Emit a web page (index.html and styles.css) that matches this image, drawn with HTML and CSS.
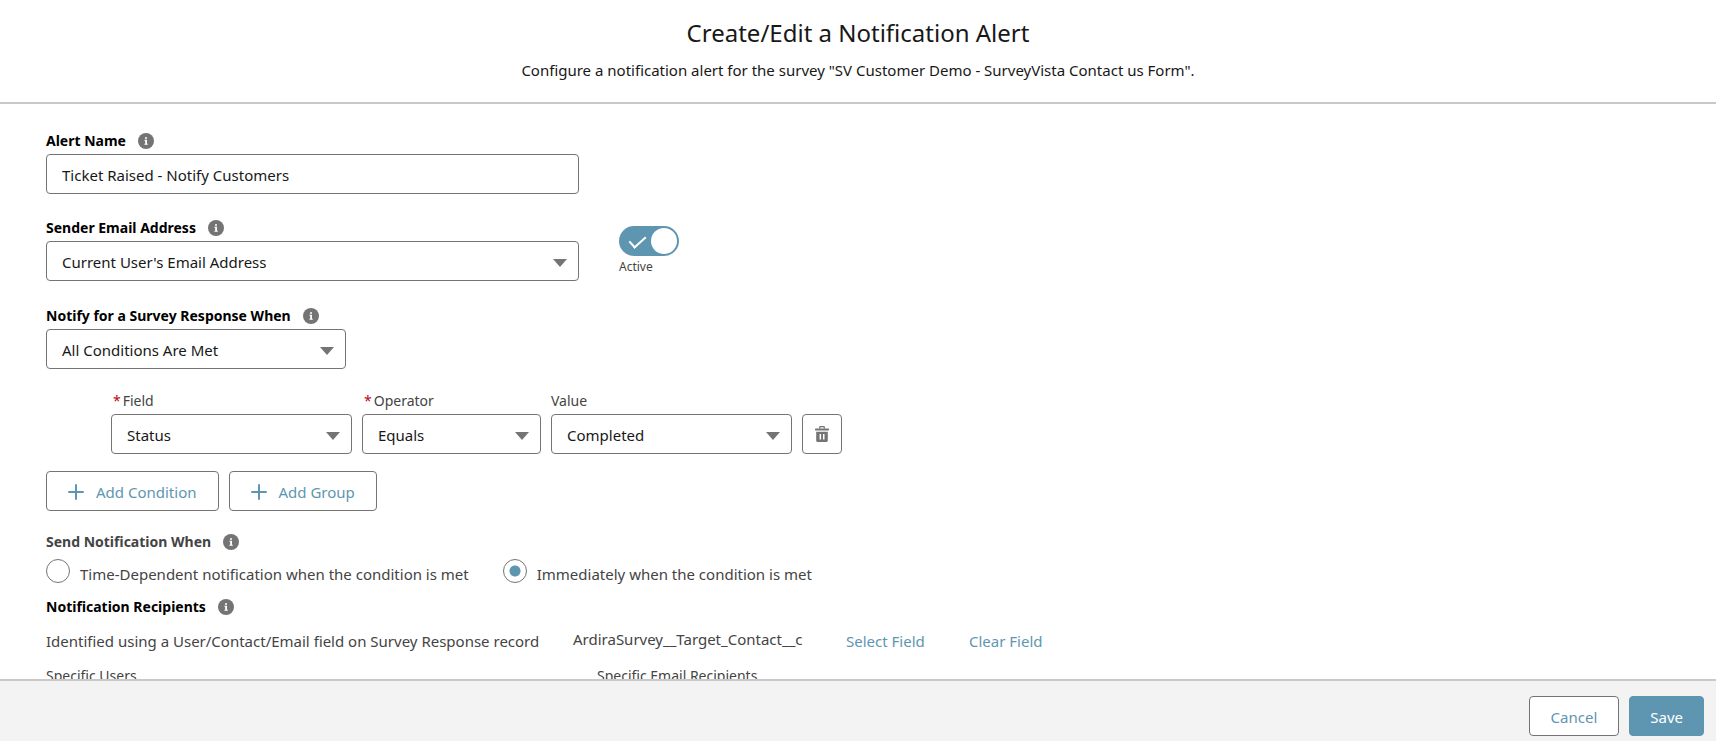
FILE: index.html
```html
<!DOCTYPE html>
<html lang="en">
<head>
<meta charset="UTF-8">
<meta name="viewport" content="width=device-width, initial-scale=1">
<title>Create/Edit a Notification Alert</title>
<link rel="stylesheet" href="styles.css">
</head>
<body>

<!-- shared icons -->
<svg class="sprite" aria-hidden="true">
  <symbol id="icon-info" viewBox="0 0 16 16">
    <circle cx="8" cy="8" r="8" fill="#747474"/>
    <rect x="7" y="4" width="2" height="2" rx="1" fill="#fff"/>
    <path d="M6.4 6.8H9v3.9h.8v1H6.4v-1h.8V7.8h-.8z" fill="#fff"/>
  </symbol>
  <symbol id="icon-plus" viewBox="0 0 16 16">
    <path d="M8 1v14M1 8h14" fill="none" stroke="currentColor" stroke-width="2" stroke-linecap="round"/>
  </symbol>
</svg>

<header class="header">
  <h1>Create/Edit a Notification Alert</h1>
  <p>Configure a notification alert for the survey "SV Customer Demo - SurveyVista Contact us Form".</p>
</header>

<main class="content">
  <div class="field field-wide">
    <div class="label-row">
      <label class="label" for="alert-name">Alert Name</label>
      <svg class="info"><use href="#icon-info"/></svg>
    </div>
    <input class="control" type="text" id="alert-name" value="Ticket Raised - Notify Customers">
  </div>

  <div class="sender-row">
    <div class="field field-wide">
      <div class="label-row">
        <label class="label" for="sender">Sender Email Address</label>
        <svg class="info"><use href="#icon-info"/></svg>
      </div>
      <div class="select">
        <select class="control" id="sender"><option>Current User's Email Address</option></select>
      </div>
    </div>
    <div class="toggle">
      <input type="checkbox" id="active" checked>
      <label for="active">Active</label>
    </div>
  </div>

  <div class="field field-medium">
    <div class="label-row">
      <label class="label" for="logic">Notify for a Survey Response When</label>
      <svg class="info"><use href="#icon-info"/></svg>
    </div>
    <div class="select">
      <select class="control" id="logic"><option>All Conditions Are Met</option></select>
    </div>
  </div>

  <div class="condition">
    <div class="field">
      <label class="sub-label required" for="field">Field</label>
      <div class="select">
        <select class="control" id="field"><option>Status</option></select>
      </div>
    </div>
    <div class="field">
      <label class="sub-label required" for="operator">Operator</label>
      <div class="select">
        <select class="control" id="operator"><option>Equals</option></select>
      </div>
    </div>
    <div class="field">
      <label class="sub-label" for="value">Value</label>
      <div class="select">
        <select class="control" id="value"><option>Completed</option></select>
      </div>
    </div>
    <button class="btn btn-icon" type="button" aria-label="Delete condition">
      <svg width="14" height="16" viewBox="0 0 14 16">
        <path d="M4.7 2.6V1.4Q4.7.7 5.4.7h3.2q.7 0 .7.7v1.2" fill="none" stroke="#747474" stroke-width="1.3"/>
        <rect x="0" y="2.5" width="14" height="2" rx=".7" fill="#747474"/>
        <path fill="#747474" fill-rule="evenodd" d="M1.2 5.8h11.6v8.7q0 1.5-1.5 1.5H2.7q-1.5 0-1.5-1.5zM4.6 8v5.5h1.5V8zM8 8v5.5h1.5V8z"/>
      </svg>
    </button>
  </div>

  <div class="actions">
    <button class="btn" type="button"><svg class="plus"><use href="#icon-plus"/></svg>Add Condition</button>
    <button class="btn" type="button"><svg class="plus"><use href="#icon-plus"/></svg>Add Group</button>
  </div>

  <div class="label-row send-when">
    <span class="label label-soft" id="send-when">Send Notification When</span>
    <svg class="info"><use href="#icon-info"/></svg>
  </div>
  <div class="radios" role="radiogroup" aria-labelledby="send-when">
    <input type="radio" name="timing" id="time-dependent">
    <label for="time-dependent">Time-Dependent notification when the condition is met</label>
    <input type="radio" name="timing" id="immediately" checked>
    <label for="immediately">Immediately when the condition is met</label>
  </div>

  <div class="label-row recipients-title">
    <h2 class="label">Notification Recipients</h2>
    <svg class="info"><use href="#icon-info"/></svg>
  </div>
  <div class="recipients">
    <span>Identified using a User/Contact/Email field on Survey Response record</span>
    <span class="field-name">ArdiraSurvey__Target_Contact__c</span>
    <a href="#">Select Field</a>
    <a href="#">Clear Field</a>
  </div>
  <div class="specific">
    <span>Specific Users</span>
    <span>Specific Email Recipients</span>
  </div>
</main>

<footer class="footer">
  <button class="btn" type="button">Cancel</button>
  <button class="btn btn-primary" type="button">Save</button>
</footer>

</body>
</html>
```
FILE: styles.css
```css
* {
  box-sizing: border-box;
}
body {
  margin: 0;
  height: 100vh;
  display: flex;
  flex-direction: column;
  font-family: "Segoe UI", "Noto Sans", sans-serif;
  font-size: 15px;
  line-height: 24px;
  color: #444;
  background: #fff;
}
.sprite {
  display: none;
}

/* header */
.header {
  flex: none;
  padding: 16px 20px 20px;
  text-align: center;
  color: #181818;
  border-bottom: 2px solid #c9c9c9;
}
.header h1 {
  margin: 0 0 8px;
  font-size: 24px;
  font-weight: 400;
  line-height: 34px;
}
.header p {
  margin: 0;
}

/* form */
.content {
  flex: 1;
  min-height: 0;
  padding: 24px 46px 0;
  overflow-y: auto;
  scrollbar-width: none;
}
.field-wide {
  width: 533px;
  max-width: 100%;
}
.field-medium {
  width: 300px;
  max-width: 100%;
}
.label-row {
  display: flex;
  align-items: center;
  gap: 12px;
  height: 26px;
}
.label {
  margin: 0;
  font-size: 14px;
  font-weight: 700;
  line-height: 26px;
  color: #000;
}
.label-soft {
  color: #444;
}
.info {
  width: 16px;
  height: 16px;
}
.control {
  display: block;
  width: 100%;
  height: 40px;
  padding: 2px 15px 0;
  font: inherit;
  color: #181818;
  background: #fff;
  border: 1px solid #747474;
  border-radius: 4px;
  appearance: none;
}
.select {
  position: relative;
}
.select::after {
  content: "";
  position: absolute;
  top: 18px;
  right: 12px;
  border: 7px solid transparent;
  border-top: 8px solid #747474;
  border-bottom: 0;
  pointer-events: none;
}
.sender-row {
  display: flex;
  align-items: flex-end;
  gap: 40px;
  margin: 21px 0 22px;
}

/* toggle */
.toggle {
  display: flex;
  flex-direction: column;
  padding-bottom: 5px;
  font-size: 12px;
  line-height: 18px;
}
.toggle input {
  position: relative;
  width: 60px;
  height: 30px;
  margin: 0 0 2px;
  border-radius: 15px;
  background: #5e96b1;
  appearance: none;
}
.toggle input::before {
  content: "";
  position: absolute;
  top: 6px;
  left: 14px;
  width: 7px;
  height: 14px;
  border: solid #fff;
  border-width: 0 2px 2px 0;
  transform: rotate(48deg);
}
.toggle input::after {
  content: "";
  position: absolute;
  top: 2px;
  right: 2px;
  width: 26px;
  height: 26px;
  border-radius: 50%;
  background: #fff;
}

/* condition */
.condition {
  display: grid;
  grid-template-columns: 241px 179px 241px 40px;
  gap: 10px;
  align-items: end;
  margin: 19px 0 17px;
  padding-left: 65px;
}
.sub-label {
  display: block;
  font-size: 14px;
  line-height: 26px;
}
.required::before {
  content: "*";
  margin: 0 2px;
  color: #ba0517;
}
.actions {
  display: flex;
  gap: 10px;
}
.btn {
  display: inline-flex;
  align-items: center;
  justify-content: center;
  height: 40px;
  padding: 1px 21px 0;
  font: inherit;
  color: #5e96b1;
  background: #fff;
  border: 1px solid #747474;
  border-radius: 4px;
}
.btn-icon {
  padding: 0;
}
.plus {
  width: 16px;
  height: 16px;
  margin-right: 12px;
}

/* timing */
.send-when {
  margin-top: 18px;
}
.radios {
  display: flex;
  align-items: flex-start;
  margin-top: 4px;
}
.radios input {
  flex: none;
  width: 24px;
  height: 24px;
  margin: 0 10px 0 0;
  border: 1px solid #747474;
  border-radius: 50%;
  background: #fff;
  appearance: none;
}
.radios input:checked {
  background: radial-gradient(circle, #5e96b1 5px, #fff 6px);
}
.radios label {
  padding-top: 3px;
  margin-right: 34px;
}

/* recipients */
.recipients-title {
  margin-top: 8px;
}
.recipients {
  display: grid;
  grid-template-columns: 527px 273px 123px auto;
  align-items: end;
  margin-top: 7px;
}
.recipients a {
  color: #5e96b1;
  text-decoration: none;
}
.field-name {
  padding-bottom: 2px;
}
.specific {
  display: grid;
  grid-template-columns: 551px auto;
  margin-top: 11px;
  font-size: 14px;
}

/* footer */
.footer {
  flex: none;
  display: flex;
  justify-content: flex-end;
  gap: 10px;
  padding: 15px 12px 5px;
  background: #f3f3f3;
  border-top: 2px solid #c9c9c9;
}
.btn-primary {
  padding: 1px 20px 0;
  color: #fff;
  background: #5e96b1;
  border-color: #5e96b1;
}
```
